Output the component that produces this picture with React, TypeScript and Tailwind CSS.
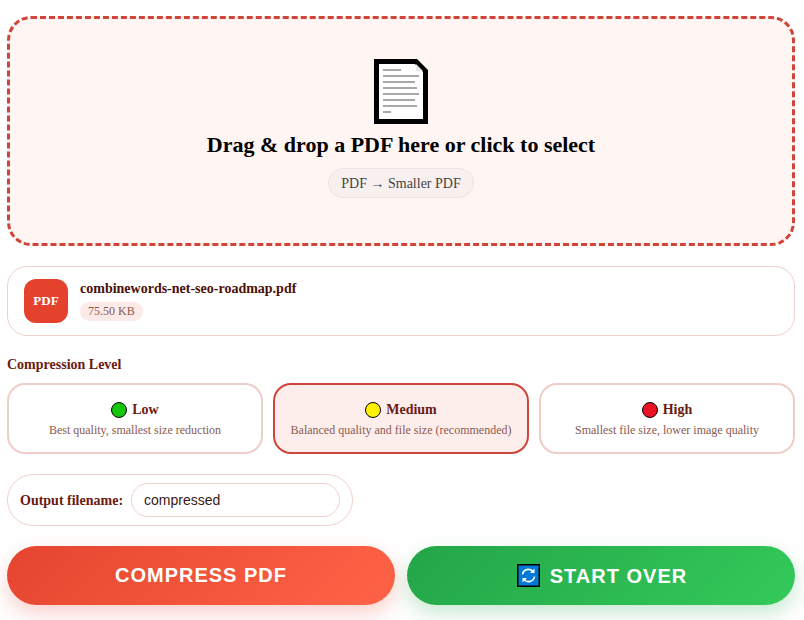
import React from 'react';

const LEVELS = [
  { name: 'Low', desc: 'Best quality, smallest size reduction', dot: 'bg-[#16c60c]' },
  { name: 'Medium', desc: 'Balanced quality and file size (recommended)', dot: 'bg-[#fff100]', active: true },
  { name: 'High', desc: 'Smallest file size, lower image quality', dot: 'bg-[#e81224]' }
];

function DocIcon() {
  return (
    <svg width="54" height="65" viewBox="0 0 54 65" className="block">
      <path d="M2.5 2.5H42L51.5 12V62.5H2.5Z" fill="#fff" stroke="#000" strokeWidth="5" />
      <path d="M42 5L49 12H42Z" fill="#e6e6e6" />
      <g fill="#a8a8a8">
        <rect x="9" y="10" width="18" height="2" />
        <rect x="9" y="16" width="36" height="2" />
        <rect x="9" y="22" width="32" height="2" />
        <rect x="9" y="28" width="34" height="2" />
        <rect x="9" y="34" width="36" height="2" />
        <rect x="9" y="40" width="32" height="2" />
        <rect x="9" y="46" width="34" height="2" />
        <rect x="9" y="52" width="8" height="2" />
      </g>
    </svg>
  );
}

function RefreshEmoji() {
  return (
    <svg width="23" height="23" viewBox="0 0 23 23" className="block">
      <rect x="0.75" y="0.75" width="21.5" height="21.5" fill="#0078d7" stroke="#000" strokeWidth="1.5" />
      <path d="M5.5 10.5A6 6 0 0 1 16 7.5" fill="none" stroke="#fff" strokeWidth="1.6" />
      <path d="M17.5 12.5A6 6 0 0 1 7 15.5" fill="none" stroke="#fff" strokeWidth="1.6" />
      <path d="M17.5 4.5V9H13Z" fill="#fff" />
      <path d="M5.5 18.5V14H10Z" fill="#fff" />
    </svg>
  );
}

export default function App() {
  return (
    <div className="w-[788px] ml-[7px] pt-[16px] pb-[15px] font-['Liberation_Serif',serif]">
      {/* Drop zone */}
      <div className="h-[230px] border-[3px] border-dashed border-[#d0453a] rounded-[24px] bg-[#fff5f3] flex flex-col items-center pt-[40px]">
        <DocIcon />
        <div className="mt-[5px] text-[22px] leading-[32px] font-bold text-black">
          Drag &amp; drop a PDF here or click to select
        </div>
        <div className="mt-[7px] h-[30px] px-[12px] flex items-center rounded-full bg-[#f8f0ee] border border-[#efe4e2] text-[14px] text-[#444]">
          PDF → Smaller PDF
        </div>
      </div>

      {/* Selected file */}
      <div className="mt-[20px] h-[70px] border border-[#efd0cc] rounded-[20px] flex items-center pl-[16px] gap-[12px] bg-white">
        <div className="w-[44px] h-[44px] rounded-[12px] bg-[#e4422d] flex items-center justify-center text-white text-[13px] font-bold">
          PDF
        </div>
        <div>
          <div className="text-[14px] leading-[18px] font-bold text-[#4a0f08]">combinewords-net-seo-roadmap.pdf</div>
          <div className="mt-[3px] inline-block px-[8px] h-[19px] leading-[19px] rounded-full bg-[#fbeae7] text-[12px] text-[#8a5a52]">
            75.50 KB
          </div>
        </div>
      </div>

      {/* Compression */}
      <div className="mt-[20px] text-[14px] leading-[18px] font-bold text-[#6b1a10]">Compression Level</div>
      <div className="mt-[9px] grid grid-cols-3 gap-[10px]">
        {LEVELS.map(level => (
          <div
            key={level.name}
            className={
              level.active
                ? 'h-[71px] pt-[2px] rounded-[18px] border-2 border-[#d0453a] bg-[#fdeeeb] flex flex-col items-center justify-center'
                : 'h-[71px] pt-[2px] rounded-[18px] border-2 border-[#efcdc8] bg-white flex flex-col items-center justify-center'
            }
          >
            <div className="flex items-center gap-[5px] text-[14px] leading-[18px] font-bold text-[#6b1a10]">
              <span className={`w-[16px] h-[16px] rounded-full border border-black ${level.dot}`} />
              {level.name}
            </div>
            <div className="mt-[3px] text-[12px] leading-[16px] text-[#8a5a52]">{level.desc}</div>
          </div>
        ))}
      </div>

      {/* Output filename */}
      <div className="mt-[20px] w-[346px] h-[52px] border border-[#efd0cc] rounded-full flex items-center pl-[12px] gap-[8px]">
        <label className="text-[14px] font-bold text-[#6b1a10]">Output filename:</label>
        <input
          defaultValue="compressed"
          className="w-[209px] h-[34px] px-[12px] border border-[#efd0cc] rounded-full text-[14px] text-[#3a1a14] font-['Liberation_Sans',sans-serif] outline-none"
        />
      </div>

      {/* Actions */}
      <div className="mt-[20px] grid grid-cols-2 gap-[12px] font-['Liberation_Sans',sans-serif]">
        <button className="h-[59px] pb-[2px] rounded-full bg-linear-[135deg] from-[#e5452f] to-[#ff6347] shadow-[0_8px_20px_rgba(232,67,46,0.25)] text-white text-[20px] font-bold tracking-[1px]">
          COMPRESS PDF
        </button>
        <button className="h-[59px] pl-[2px] rounded-full bg-linear-[135deg] from-[#23a548] to-[#34ca5a] shadow-[0_8px_20px_rgba(34,164,71,0.25)] text-white text-[20px] font-bold tracking-[1px] flex items-center justify-center gap-[10px]">
          <RefreshEmoji />
          START OVER
        </button>
      </div>
    </div>
  );
}
